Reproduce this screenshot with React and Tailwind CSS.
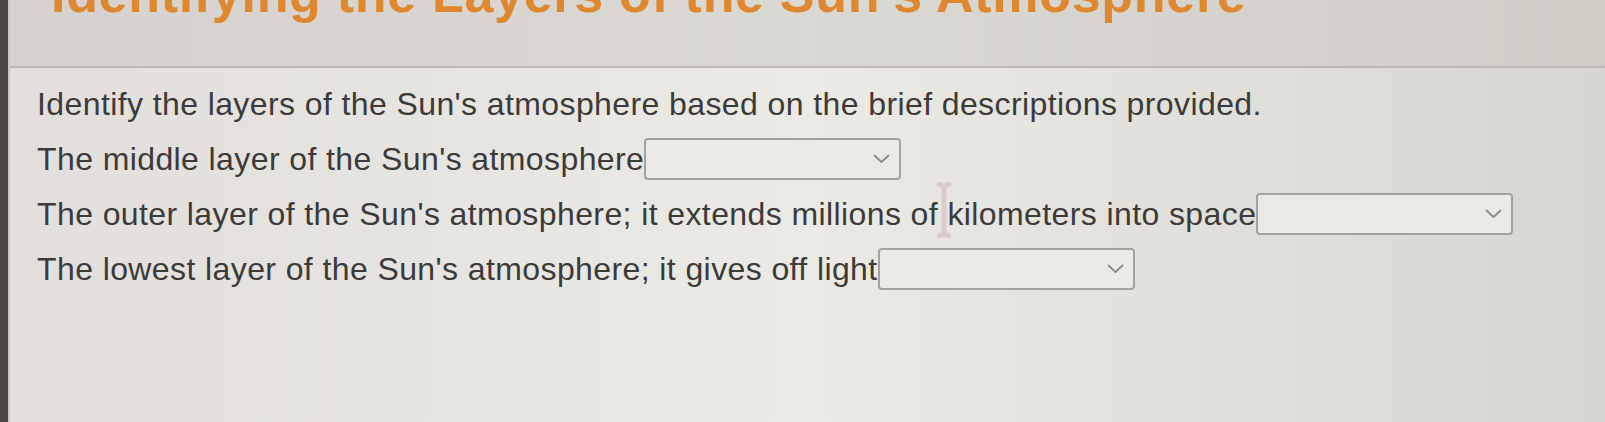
const rows = [
  "The middle layer of the Sun's atmosphere",
  "The outer layer of the Sun's atmosphere; it extends millions of kilometers into space",
  "The lowest layer of the Sun's atmosphere; it gives off light",
];

function Dropdown() {
  return (
    <button
      type="button"
      className="w-[257px] h-[42px] shrink-0 rounded-[4px] border-2 border-[#a4a29e] bg-[#ebeae6] flex items-center justify-end pr-[9px]"
    >
      <svg width="17" height="10" viewBox="0 0 17 10" fill="none">
        <path d="M1.5 1.5 L8.5 8 L15.5 1.5" stroke="#8d8b88" strokeWidth="1.8" strokeLinecap="round" strokeLinejoin="round" />
      </svg>
    </button>
  );
}

export default function App() {
  return (
    <div className="h-[422px] w-full overflow-hidden flex font-['Liberation_Sans',Arial,sans-serif]">
      <div className="w-[8px] shrink-0 bg-[#4b4543]" />
      <div className="w-[2px] shrink-0 bg-[#cdc8c4]" />

      <div className="flex-1 flex flex-col relative">
        {/* page title, scrolled partly out of view */}
        <div className="h-[68px] shrink-0 overflow-hidden bg-linear-to-r from-[#d6d2cf] via-[#dbd9d4] to-[#d1cec8] border-b-2 border-[#bdbab4] pl-[41px]">
          <h1 className="mt-[-32px] text-[52px] leading-none font-bold tracking-[0.7px] text-[#e0882f] whitespace-nowrap">
            Identifying the Layers of the Sun's Atmosphere
          </h1>
        </div>

        <div className="flex-1 bg-linear-to-r from-[#e2dfdc] via-[#ebeae5] to-[#d8d6d0] pl-[27px] pt-[15px] flex flex-col gap-[13px] text-[32px] tracking-[0.4px] text-[#3c3b3a]">
          <div className="h-[42px] flex items-center whitespace-nowrap">
            Identify the layers of the Sun's atmosphere based on the brief descriptions provided.
          </div>
          {rows.map((label) => (
            <div key={label} className="h-[42px] flex items-center whitespace-nowrap">
              <span>{label}</span>
              <Dropdown />
            </div>
          ))}
        </div>

        {/* mouse text cursor */}
        <div className="absolute left-[925px] top-[182px] w-[18px] h-[56px] opacity-40 pointer-events-none">
          <svg width="18" height="56" viewBox="0 0 18 56" fill="none">
            <path d="M2 2 Q9 2 9 8 L9 48 Q9 54 2 54 M16 2 Q9 2 9 8 M9 48 Q9 54 16 54" stroke="#c9a7b4" strokeWidth="5" />
          </svg>
        </div>
      </div>
    </div>
  );
}
